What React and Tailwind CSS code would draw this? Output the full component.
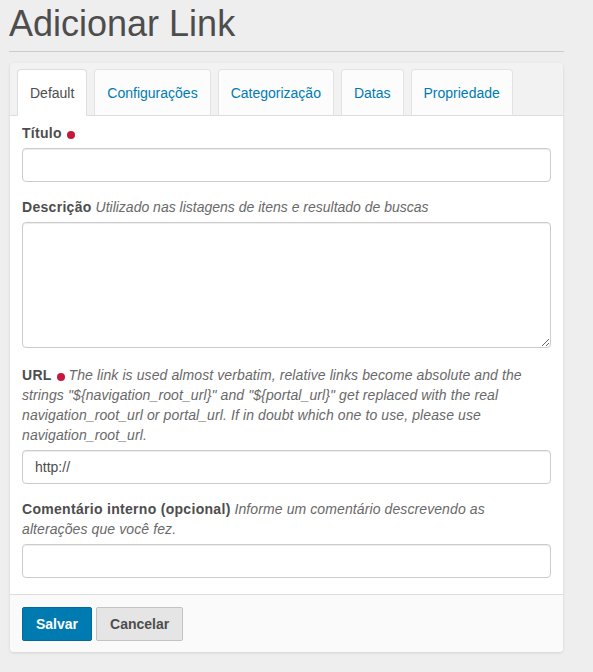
import React, { useState } from 'react';

const tabs = ['Default', 'Configurações', 'Categorização', 'Datas', 'Propriedade'];

const Required = () => (
  <span className="inline-block w-[8px] h-[8px] rounded-full bg-[#c4183c] ml-[5px] align-[-1px]"></span>
);

const inputCls =
  'block w-full h-[34px] px-[12px] border border-[#cccccc] rounded-[4px] bg-white text-[14px] text-[#4d4d4d] shadow-[inset_0_1px_1px_rgba(0,0,0,0.075)] outline-none';

const App = () => {
  const [active, setActive] = useState('Default');
  const [url, setUrl] = useState('http://');

  return (
    <div className="min-h-screen bg-[#eeeeee] font-['Liberation_Sans',Arial,sans-serif] text-[#4d4d4d] text-[14px] leading-[20px]">
      <div className="w-[555px] ml-[9px] pt-[4px] pb-[20px]">
        <h1 className="text-[36px] leading-[40px] font-normal">Adicionar Link</h1>
        <hr className="mt-[7px] border-[#cccccc]" />

        <div className="mt-[11px] mx-px bg-[#f2f2f2] rounded-[4px] shadow-[0_1px_3px_rgba(0,0,0,0.12)]">
          {/* tabs */}
          <div className="flex gap-[7px] pt-[6px] pl-[7px] border-b border-[#dddddd]">
            {tabs.map((t) => (
              <button
                key={t}
                onClick={() => setActive(t)}
                className={
                  t === active
                    ? 'h-[47px] -mb-px px-[12px] flex items-center rounded-t-[4px] border border-[#dddddd] border-b-white bg-white text-[#4d4d4d]'
                    : 'h-[47px] -mb-px px-[12px] flex items-center rounded-t-[4px] border border-[#e3e3e3] border-b-[#dddddd] bg-[#fcfcfc] text-[#007bb1]'
                }
              >
                {t}
              </button>
            ))}
          </div>

          {/* form body */}
          <div className="bg-white px-[12px] pt-[7px] pb-[16px]">
            <div className="mb-[15px]">
              <label className="block mb-[5px] font-bold tracking-[0.3px]">
                Título
                <Required />
              </label>
              <input className={inputCls} type="text" />
            </div>

            <div className="mb-[17px]">
              <label className="block mb-[5px]">
                <span className="font-bold tracking-[0.3px]">Descrição</span>{' '}
                <span className="italic text-[#696969]">Utilizado nas listagens de itens e resultado de buscas</span>
              </label>
              <textarea className="block w-full h-[126px] px-[12px] py-[6px] border border-[#cccccc] rounded-[4px] bg-white shadow-[inset_0_1px_1px_rgba(0,0,0,0.075)] outline-none"></textarea>
            </div>

            <div className="mb-[15px]">
              <label className="block mb-[5px]">
                <span className="font-bold tracking-[0.3px]">URL</span>
                <Required />{' '}
                <span className="italic text-[#696969] tracking-[0.1px]">
                  The link is used almost verbatim, relative links become absolute and the
                  <br />
                  strings "${'{'}navigation_root_url{'}'}" and "${'{'}portal_url{'}'}" get replaced with the real
                  <br />
                  navigation_root_url or portal_url. If in doubt which one to use, please use
                  <br />
                  navigation_root_url.
                </span>
              </label>
              <input className={inputCls} type="text" value={url} onChange={(e) => setUrl(e.target.value)} />
            </div>

            <div>
              <label className="block mb-[5px]">
                <span className="font-bold tracking-[0.3px]">Comentário interno (opcional)</span>{' '}
                <span className="italic text-[#696969] tracking-[0.1px]">
                  Informe um comentário descrevendo as
                  <br />
                  alterações que você fez.
                </span>
              </label>
              <input className={inputCls} type="text" />
            </div>
          </div>

          {/* footer */}
          <div className="flex gap-[4px] px-[12px] pt-[12px] pb-[11px] bg-[#fafafa] border-t border-[#dddddd] rounded-b-[4px]">
            <button className="h-[34px] px-[13px] rounded-[2px] border border-[#00699a] bg-[#007bb1] text-white font-bold">
              Salvar
            </button>
            <button className="h-[34px] px-[13px] rounded-[2px] border border-[#c2c2c2] bg-[#e5e5e5] text-[#4d4d4d] font-bold">
              Cancelar
            </button>
          </div>
        </div>
      </div>
    </div>
  );
};

export default App;
